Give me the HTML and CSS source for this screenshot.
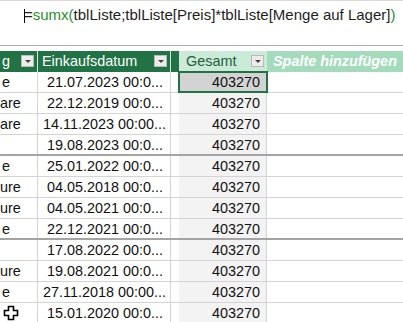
FILE: index.html
```html
<!DOCTYPE html>
<html lang="de">
<head>
    <meta charset="UTF-8">
    <title>tblListe</title>
    <link rel="stylesheet" href="styles.css">
</head>
<body>
    <div class="formula-bar">
        <span class="caret"></span>=<span class="fn">sumx(</span>tblListe;tblListe[Preis]*tblListe[Menge auf Lager]<span class="fn">)</span>
    </div>

    <div class="sheet">
        <div class="row head">
            <div class="cell col-a">g<span class="drop"></span></div>
            <div class="cell col-b">Einkaufsdatum<span class="drop"></span></div>
            <div class="cell col-c"></div>
            <div class="cell col-d"></div>
            <div class="cell col-sum">Gesamt<span class="drop"></span></div>
            <div class="cell col-add">Spalte hinzufügen</div>
        </div>

        <div class="row">
            <div class="cell col-a">e</div>
            <div class="cell col-b">21.07.2023 00:0...</div>
            <div class="cell col-c"></div><div class="cell col-d"></div>
            <div class="cell col-sum selected">403270</div>
            <div class="cell col-add"></div>
        </div>
        <div class="row">
            <div class="cell col-a clip">are</div>
            <div class="cell col-b">22.12.2019 00:0...</div>
            <div class="cell col-c"></div><div class="cell col-d"></div>
            <div class="cell col-sum">403270</div>
            <div class="cell col-add"></div>
        </div>
        <div class="row">
            <div class="cell col-a clip">are</div>
            <div class="cell col-b">14.11.2023 00:00...</div>
            <div class="cell col-c"></div><div class="cell col-d"></div>
            <div class="cell col-sum">403270</div>
            <div class="cell col-add"></div>
        </div>
        <div class="row group-end">
            <div class="cell col-a"></div>
            <div class="cell col-b">19.08.2023 00:0...</div>
            <div class="cell col-c"></div><div class="cell col-d"></div>
            <div class="cell col-sum">403270</div>
            <div class="cell col-add"></div>
        </div>
        <div class="row">
            <div class="cell col-a">e</div>
            <div class="cell col-b">25.01.2022 00:0...</div>
            <div class="cell col-c"></div><div class="cell col-d"></div>
            <div class="cell col-sum">403270</div>
            <div class="cell col-add"></div>
        </div>
        <div class="row">
            <div class="cell col-a clip">ure</div>
            <div class="cell col-b">04.05.2018 00:0...</div>
            <div class="cell col-c"></div><div class="cell col-d"></div>
            <div class="cell col-sum">403270</div>
            <div class="cell col-add"></div>
        </div>
        <div class="row">
            <div class="cell col-a clip">ure</div>
            <div class="cell col-b">04.05.2021 00:0...</div>
            <div class="cell col-c"></div><div class="cell col-d"></div>
            <div class="cell col-sum">403270</div>
            <div class="cell col-add"></div>
        </div>
        <div class="row group-end">
            <div class="cell col-a">e</div>
            <div class="cell col-b">22.12.2021 00:0...</div>
            <div class="cell col-c"></div><div class="cell col-d"></div>
            <div class="cell col-sum">403270</div>
            <div class="cell col-add"></div>
        </div>
        <div class="row">
            <div class="cell col-a"></div>
            <div class="cell col-b">17.08.2022 00:0...</div>
            <div class="cell col-c"></div><div class="cell col-d"></div>
            <div class="cell col-sum">403270</div>
            <div class="cell col-add"></div>
        </div>
        <div class="row">
            <div class="cell col-a clip">ure</div>
            <div class="cell col-b">19.08.2021 00:0...</div>
            <div class="cell col-c"></div><div class="cell col-d"></div>
            <div class="cell col-sum">403270</div>
            <div class="cell col-add"></div>
        </div>
        <div class="row">
            <div class="cell col-a">e</div>
            <div class="cell col-b">27.11.2018 00:00...</div>
            <div class="cell col-c"></div><div class="cell col-d"></div>
            <div class="cell col-sum">403270</div>
            <div class="cell col-add"></div>
        </div>
        <div class="row">
            <div class="cell col-a">
                <svg class="move-cursor" width="16" height="16" viewBox="0 0 16 16">
                    <path d="M5.5 1.5h5v4h4v5h-4v4h-5v-4h-4v-5h4z" fill="#fff" stroke="#000" stroke-width="1.6"/>
                </svg>
            </div>
            <div class="cell col-b">15.01.2020 00:0...</div>
            <div class="cell col-c"></div><div class="cell col-d"></div>
            <div class="cell col-sum">403270</div>
            <div class="cell col-add"></div>
        </div>
    </div>
</body>
</html>
```

FILE: styles.css
```css
*,::before,::after {
    box-sizing: border-box;
}
body {
    margin: 0;
    font-family: 'Liberation Sans', Arial, sans-serif;
    background: #fff;
    color: #111;
    overflow: hidden;
}

/* formula bar */
.formula-bar {
    height: 46px;
    border-top: 1px solid #dadada;
    border-bottom: 1px solid #acacac;
    padding: 5px 0 0 24px;
    font-size: 15px;
    line-height: 18px;
    color: #1e1e1e;
    white-space: nowrap;
    margin-bottom: 5px;
}
.formula-bar .fn {
    color: #27912b;
}
.caret {
    display: inline-block;
    width: 1px;
    height: 14px;
    background: #000;
    vertical-align: -3px;
    margin-right: -1px;
}

/* grid */
.sheet {
    font-size: 14.4px;
}
.row {
    display: grid;
    grid-template-columns: 38px 133px 4px 4px 88px 1fr;
    height: 21px;
    border-bottom: 1px solid #d4d4d4;
}
.row.group-end {
    border-bottom: 2px solid #a4a4a4;
}
.row.head {
    border-bottom: none;
    color: #fff;
}
.cell {
    border-right: 1px solid #d4d4d4;
    line-height: 20px;
    white-space: nowrap;
    overflow: hidden;
    padding: 0 5px;
}
.cell.col-a {
    padding: 0 0 0 2px;
}
.cell.col-a.clip {
    padding-left: 0;
}
.cell.col-b {
    text-align: right;
    padding-right: 7px;
}
.cell.col-d {
    border-right: none;
    background: linear-gradient(#f4a340, #f4a340) no-repeat right 0 top 5px / 1px 3px;
}
.cell.col-sum {
    text-align: right;
    background-color: #f3f3f3;
    padding-right: 6px;
}
.cell.col-add {
    border-right: none;
}
.cell.selected {
    position: relative;
    z-index: 1;
    background-color: #d3d3d3;
    outline: 2px solid #217346;
    outline-offset: -1px;
    overflow: visible;
}

/* header row */
.head .cell {
    background: #217346;
    border-right-color: #d9e7de;
    position: relative;
    overflow: visible;
}
.head .col-b {
    text-align: left;
    padding-left: 4px;
}
.head .col-d {
    border-right: 1px solid #165232;
}
.head .col-sum {
    background: #cbead8;
    color: #1f5f3b;
    text-align: left;
    padding-left: 7px;
    border-right: none;
}
.head .col-add {
    background: #a3dbbc;
    font-weight: bold;
    font-style: italic;
    padding-left: 6px;
}
.drop {
    position: absolute;
    top: 4px;
    right: 3px;
    width: 13px;
    height: 12px;
    background: #ececec;
    border: 1px solid #b9b9b9;
}
.drop::after {
    content: "";
    position: absolute;
    left: 3px;
    top: 4px;
    border-left: 3px solid transparent;
    border-right: 3px solid transparent;
    border-top: 3px solid #444;
}
.move-cursor {
    display: block;
    margin: 2px 0 0 1px;
}
```
